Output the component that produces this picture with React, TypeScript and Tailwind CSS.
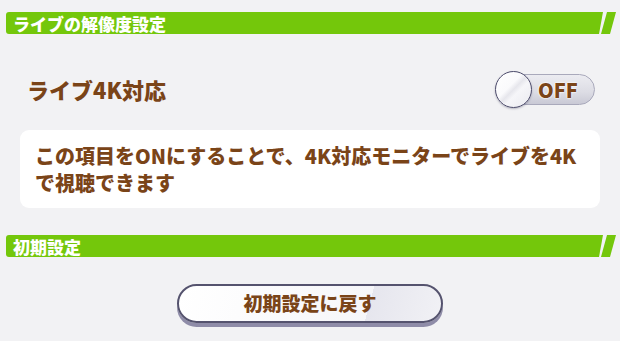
import React from 'react';

const brown = 'text-[#7a4418]';

function SectionHeader({ title }: { title: string }) {
  return (
    <div className="flex h-[22px] pl-[6px] pr-[4px]">
      <div className="flex-1 flex items-center bg-[#74c70b] rounded-l-[3px] [clip-path:polygon(0_0,100%_0,calc(100%-4px)_100%,0_100%)] pl-[7px]">
        <span className="text-white text-[17px] leading-none font-black">{title}</span>
      </div>
      <div className="w-[15px] -ml-[2px] bg-[#74c70b] [clip-path:polygon(6px_0,100%_0,9px_100%,0_100%)]" />
    </div>
  );
}

function Toggle() {
  return (
    <div className="relative w-[100px] h-[37px] flex items-center">
      <div className="absolute left-[1px] right-0 top-[3px] bottom-[3px] rounded-full border border-[#a9a9bb] bg-[linear-gradient(180deg,#ececf1_0%,#dcdce4_60%,#c9c9d5_100%)]" />
      <div className="absolute left-0 top-0 w-[37px] h-[37px] rounded-full border-[1.5px] border-[#4c4b6b] bg-[linear-gradient(135deg,#ffffff_0%,#fafafc_40%,#e6e6ec_50%,#f6f6f9_60%,#e9e9ef_100%)] shadow-[0_1px_2px_rgba(60,60,90,0.35)]" />
      <span className={`relative ml-[43px] text-[20px] font-black leading-none ${brown} [text-shadow:0_0_2px_#fff,0_0_2px_#fff,0_0_1px_#fff]`}>OFF</span>
    </div>
  );
}

export default function App() {
  return (
    <div className="w-[620px] h-[341px] bg-[#f2f2f4] pt-[12px] font-['Noto_Sans_CJK_JP','Noto_Sans',sans-serif] overflow-hidden">
      <SectionHeader title="ライブの解像度設定" />

      <div className="mt-[37px] h-[37px] flex items-center justify-between pl-[27px] pr-[25px]">
        <span className={`text-[22px] font-black ${brown}`}>ライブ4K対応</span>
        <Toggle />
      </div>

      <div className="mt-[22px] mx-[20px] h-[78px] bg-white rounded-[9px] px-[15px] pt-[12px]">
        <p className={`text-[20px] leading-[27px] font-black ${brown}`}>
          この項目をONにすることで、4K対応モニターでライブを4K
          <br />
          で視聴できます
        </p>
      </div>

      <div className="mt-[27px]">
        <SectionHeader title="初期設定" />
      </div>

      <div className="mt-[27px] flex justify-center">
        <button className="w-[266px] h-[39px] rounded-full border-2 border-[#55536e] bg-[linear-gradient(105deg,#ffffff_0%,#f6f6f9_72%,#e6e6ee_72%,#f1f1f5_100%)] shadow-[0_4px_0_#8f8ca8] flex items-center justify-center">
          <span className={`text-[19px] font-black ${brown}`}>初期設定に戻す</span>
        </button>
      </div>
    </div>
  );
}
